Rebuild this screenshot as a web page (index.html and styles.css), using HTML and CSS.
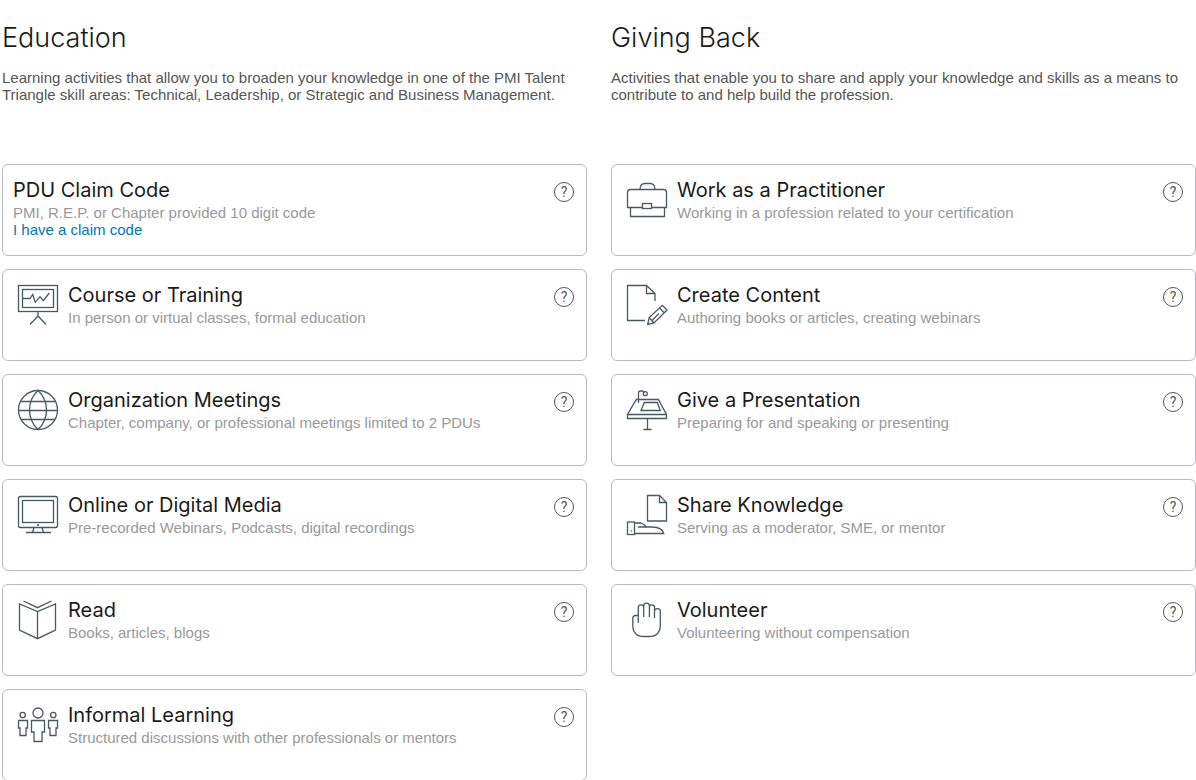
FILE: index.html
```html
<!DOCTYPE html>
<html lang="en">
<head>
    <meta charset="UTF-8">
    <meta name="viewport" content="width=device-width, initial-scale=1">
    <title>Report PDUs</title>
    <link rel="stylesheet" href="styles.css">
</head>
<body>
    <main class="columns">
        <section class="column">
            <h1>Education</h1>
            <p class="intro">Learning activities that allow you to broaden your knowledge in one of the PMI Talent Triangle skill areas: Technical, Leadership, or Strategic and Business Management.</p>
            <div class="cards">
                <article class="card">
                    <div class="text">
                        <h2>PDU Claim Code</h2>
                        <p>PMI, R.E.P. or Chapter provided 10 digit code</p>
                        <a href="#">I have a claim code</a>
                    </div>
                    <button class="help" type="button" aria-label="Help: PDU Claim Code">?</button>
                </article>
                <article class="card">
                    <svg class="icon" viewBox="0 0 50 50">
                        <rect x="5.5" y="5.5" width="39" height="26"/>
                        <rect x="9.5" y="9.5" width="31" height="18"/>
                        <path d="M10 18.5h7l2.7-4 2.6 7.8 4.7-5.6 3.3 4 6-7.7M25 31.5V36M17 44.5l8-8.5 8 8.5"/>
                    </svg>
                    <div class="text">
                        <h2>Course or Training</h2>
                        <p>In person or virtual classes, formal education</p>
                    </div>
                    <button class="help" type="button" aria-label="Help: Course or Training">?</button>
                </article>
                <article class="card">
                    <svg class="icon" viewBox="0 0 50 50">
                        <circle cx="25" cy="25" r="19.5"/>
                        <path d="M25 5.5C13.7 16 13.7 34 25 44.5C36.3 34 36.3 16 25 5.5zM7.5 16.5h35M5.5 25.5h39M8 34.5h34"/>
                    </svg>
                    <div class="text">
                        <h2>Organization Meetings</h2>
                        <p>Chapter, company, or professional meetings limited to 2 PDUs</p>
                    </div>
                    <button class="help" type="button" aria-label="Help: Organization Meetings">?</button>
                </article>
                <article class="card">
                    <svg class="icon" viewBox="0 0 50 50">
                        <rect x="5.5" y="6.5" width="39" height="31" rx="2"/>
                        <rect x="9.5" y="10.5" width="31" height="22"/>
                        <path d="M21 37.5l-1.5 5M29 37.5l1.5 5M13 42.5h25"/>
                        <circle class="dot" cx="25" cy="35" r="1"/>
                    </svg>
                    <div class="text">
                        <h2>Online or Digital Media</h2>
                        <p>Pre-recorded Webinars, Podcasts, digital recordings</p>
                    </div>
                    <button class="help" type="button" aria-label="Help: Online or Digital Media">?</button>
                </article>
                <article class="card">
                    <svg class="icon" viewBox="0 0 50 50">
                        <path d="M6.5 9v26l18 8.7 18-8.7V9l-18 7.5zM24.5 16.5v27M10.5 6l14 6.7 14-6.7"/>
                    </svg>
                    <div class="text">
                        <h2>Read</h2>
                        <p>Books, articles, blogs</p>
                    </div>
                    <button class="help" type="button" aria-label="Help: Read">?</button>
                </article>
                <article class="card">
                    <svg class="icon" viewBox="0 0 50 50">
                        <circle cx="25" cy="13" r="5"/>
                        <path d="M18.5 20.5h13V32H29v9.5h-8V32h-2.5z"/>
                        <circle cx="9.7" cy="15" r="2.7"/>
                        <path d="M5.5 20.5h9V28H13v7.5H7V28H5.5z"/>
                        <circle cx="40.3" cy="15" r="2.7"/>
                        <path d="M35.5 20.5h9V28H43v7.5h-6V28h-1.5z"/>
                    </svg>
                    <div class="text">
                        <h2>Informal Learning</h2>
                        <p>Structured discussions with other professionals or mentors</p>
                    </div>
                    <button class="help" type="button" aria-label="Help: Informal Learning">?</button>
                </article>
            </div>
        </section>

        <section class="column">
            <h1>Giving Back</h1>
            <p class="intro">Activities that enable you to share and apply your knowledge and skills as a means to contribute to and help build the profession.</p>
            <div class="cards">
                <article class="card">
                    <svg class="icon" viewBox="0 0 50 50">
                        <path d="M20.5 32.5h-15v-15q0-3 3-3h33q3 0 3 3v15h-15M18 14.5q0-6 5-6h5q5 0 5 6M8.5 32.5v9h34v-9"/>
                        <rect x="20.5" y="28.5" width="9" height="5"/>
                    </svg>
                    <div class="text">
                        <h2>Work as a Practitioner</h2>
                        <p>Working in a profession related to your certification</p>
                    </div>
                    <button class="help" type="button" aria-label="Help: Work as a Practitioner">?</button>
                </article>
                <article class="card">
                    <svg class="icon" viewBox="0 0 50 50">
                        <path d="M23 40.5H5.5v-35h19l8.5 8V21M24.5 5.5v8H33"/>
                        <path d="M25.7 44.5l1.5-7L40.3 25.3 45 30 32 43zM27.2 37.5L32 43M37.5 28l4.7 4.7M30 40.5l7-7"/>
                    </svg>
                    <div class="text">
                        <h2>Create Content</h2>
                        <p>Authoring books or articles, creating webinars</p>
                    </div>
                    <button class="help" type="button" aria-label="Help: Create Content">?</button>
                </article>
                <article class="card">
                    <svg class="icon" viewBox="0 0 50 50">
                        <path d="M14.3 14.5h22l8.2 15v4h-39v-4zM5.5 29.5h39M22.3 17.5h13l3 8H19zM25.5 33.5v11M21.5 44.5h8"/>
                        <path d="M16.5 18V8q0-2 2-2h2l2 1.5"/>
                        <circle cx="23.3" cy="8.7" r="2"/>
                    </svg>
                    <div class="text">
                        <h2>Give a Presentation</h2>
                        <p>Preparing for and speaking or presenting</p>
                    </div>
                    <button class="help" type="button" aria-label="Help: Give a Presentation">?</button>
                </article>
                <article class="card">
                    <svg class="icon" viewBox="0 0 50 50">
                        <path d="M25.5 5.5h12l7 7V31h-19zM37.5 5.5v7h7"/>
                        <rect x="5.5" y="32" width="7" height="12.5"/>
                        <path d="M12.5 33H19q3 1 5.5 4M16 37h14q10 0 11.7 6.5H12.5"/>
                        <circle class="dot" cx="9.3" cy="41" r=".8"/>
                    </svg>
                    <div class="text">
                        <h2>Share Knowledge</h2>
                        <p>Serving as a moderator, SME, or mentor</p>
                    </div>
                    <button class="help" type="button" aria-label="Help: Share Knowledge">?</button>
                </article>
                <article class="card">
                    <svg class="icon" viewBox="0 0 50 50">
                        <path d="M16.3 28V12.5a2.7 2.7 0 0 1 5.4 0V22M21.7 12v-1a2.8 2.8 0 0 1 5.7 0v11M27.4 12.5a2.5 2.5 0 0 1 5.1 0V23M32.5 16.5a2.9 2.9 0 0 1 5.8 0V30q0 11.5-11 11.5h-5.500q-11 0-11-11.500v-6.500q0-3 3-3h2.500"/>
                    </svg>
                    <div class="text">
                        <h2>Volunteer</h2>
                        <p>Volunteering without compensation</p>
                    </div>
                    <button class="help" type="button" aria-label="Help: Volunteer">?</button>
                </article>
            </div>
        </section>
    </main>
</body>
</html>
```
FILE: styles.css
```css
* {
    box-sizing: border-box;
}
body {
    margin: 0;
    background-color: #fff;
    font-family: "Liberation Sans", Arial, sans-serif;
    font-size: 15px;
    line-height: 17px;
    color: #555;
}
h1, h2, p {
    margin: 0;
}
h1, h2 {
    font-family: Inter, sans-serif;
    color: #1a1a1a;
}
.columns {
    display: grid;
    grid-template-columns: 1fr 1fr;
    gap: 24px;
    padding: 20px 0 0 2px;
}
h1 {
    font-size: 27px;
    font-weight: 300;
    line-height: 35px;
}
.intro {
    min-height: 109px;
    padding-top: 14px;
}
.cards {
    display: grid;
    gap: 13px;
}
.card {
    display: flex;
    align-items: flex-start;
    min-height: 92px;
    padding: 10px 12px 10px 10px;
    border: 1px solid #b9bac3;
    border-radius: 6px;
}
.icon {
    flex: none;
    width: 50px;
    height: 50px;
    margin-right: 5px;
    fill: none;
    stroke: #455a64;
    stroke-width: 1.3;
}
.icon .dot {
    fill: #455a64;
    stroke: none;
}
.text {
    flex: 1;
    color: #97999b;
}
h2 {
    padding: 2px 0 1px;
    font-size: 20px;
    font-weight: 400;
    line-height: 26px;
}
.text a {
    color: #0077b9;
    text-decoration: none;
}
.text a:hover {
    text-decoration: underline;
}
.help {
    width: 20px;
    height: 20px;
    margin-top: 7px;
    padding: 0;
    border: 1px solid #555;
    border-radius: 50%;
    background: none;
    font-family: Roboto, sans-serif;
    font-size: 14px;
    line-height: 18px;
    color: #555;
    cursor: pointer;
}
```
